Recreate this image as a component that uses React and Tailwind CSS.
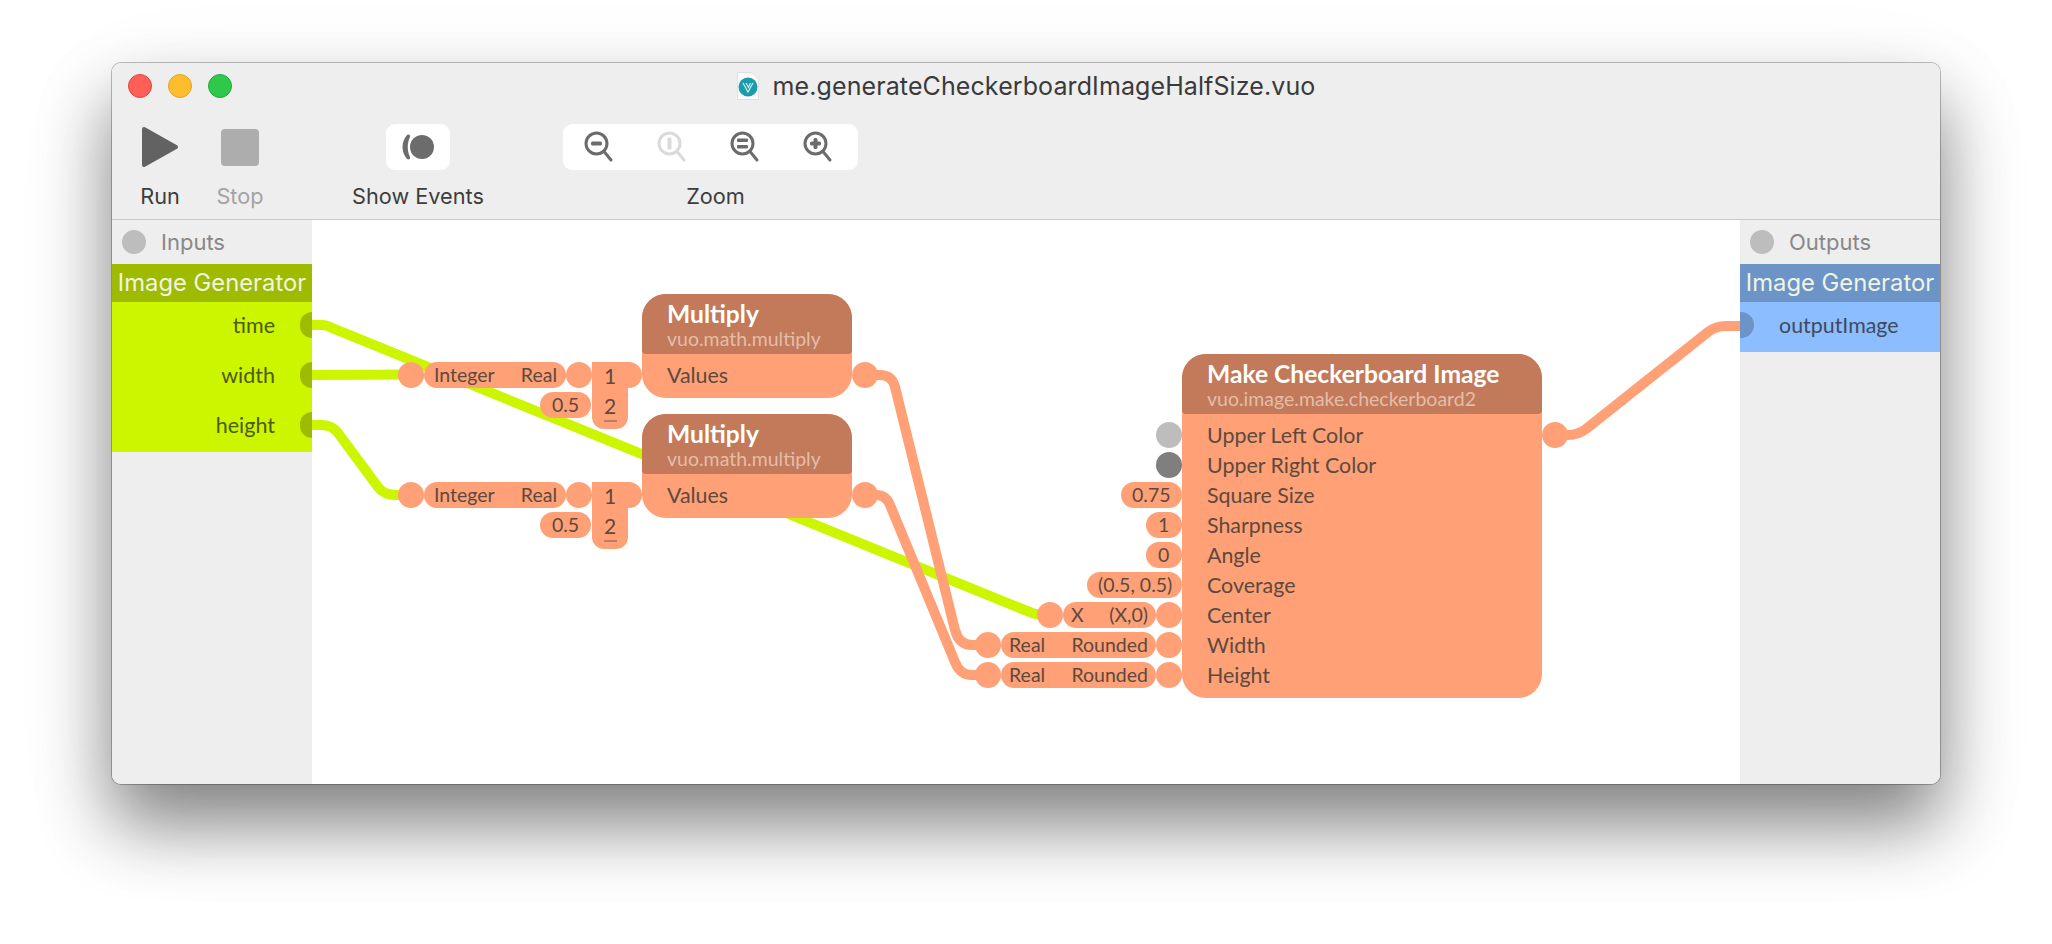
import React from 'react';

function Magnifier({ dim, children }) {
  const color = dim ? '#dadada' : '#6b6b6b';
  return (
    <svg width="32" height="32" viewBox="0 0 32 32" fill="none" stroke={color}>
      <circle cx="12.5" cy="12.5" r="10.5" strokeWidth="3" />
      <path d="M20 20.5 L27 29" strokeWidth="3" strokeLinecap="round" />
      <g fill={color} stroke="none">{children}</g>
    </svg>
  );
}

function Tool({ label, dim, className, labelClass, children }) {
  return (
    <div className={`flex flex-col items-center ${className}`}>
      <div className="flex h-[46px] w-full items-center justify-center">{children}</div>
      <div className={`mt-[12px] h-[28px] whitespace-nowrap text-[21.7px] leading-[28px] ${dim ? 'text-[#a3a3a3]' : 'text-[#3d3d3d]'} ${labelClass || ''}`}>
        {label}
      </div>
    </div>
  );
}

function TitleBar() {
  return (
    <div className="h-[157px] border-b border-[#c9c9c9] bg-[#eeeeee]">
      <div className="grid h-[46px] grid-cols-[1fr_auto_1fr] items-center">
        <div className="flex gap-[16px] pl-[16px]">
          <div className="h-[24px] w-[24px] rounded-full border border-[#e2463f] bg-[#ff5f57]" />
          <div className="h-[24px] w-[24px] rounded-full border border-[#e1a127] bg-[#ffbd2e]" />
          <div className="h-[24px] w-[24px] rounded-full border border-[#24a93a] bg-[#2ec84a]" />
        </div>
        <div className="flex items-center gap-[14px]">
          <svg width="22" height="28" viewBox="0 0 22 28">
            <path d="M0.5 0.5 H15 L21.5 7 V27.5 H0.5 Z" fill="#fbfbfb" stroke="#e0e0e0" />
            <circle cx="11" cy="15" r="9.5" fill="#1b9bab" />
            <path d="M6 11 L11 20 L16 11 M9 11 L11.5 15.5 L13.5 11" fill="none" stroke="#cfeef0" strokeWidth="1.2" />
          </svg>
          <div className="text-[25px] leading-[30px] tracking-[0.1px] text-[#3a3a3a]">me.generateCheckerboardImageHalfSize.vuo</div>
        </div>
        <div />
      </div>
      <div className="flex pl-[28px] pt-[15px]">
        <Tool label="Run" className="w-[40px]">
          <svg width="38" height="42" viewBox="0 0 38 42">
            <path d="M3 3 L35 21 L3 39 Z" fill="#626262" stroke="#626262" strokeWidth="4" strokeLinejoin="round" />
          </svg>
        </Tool>
        <Tool label="Stop" dim className="ml-[36px] w-[48px]">
          <div className="h-[37px] w-[38px] rounded-[4px] bg-[#adadad]" />
        </Tool>
        <Tool label="Show Events" className="ml-[87px] w-[134px]">
          <div className="flex h-[46px] w-[64px] items-center justify-center rounded-[9px] bg-white">
            <svg width="34" height="26" viewBox="0 0 34 26">
              <path d="M6 1 C0 8 0 18 6 25 C8 26 9.5 25 9 23 C6 17 6 9 9 3 C9.5 1 8 0 6 1 Z" fill="#6c6c6c" />
              <circle cx="21" cy="13" r="12" fill="#6c6c6c" />
            </svg>
          </div>
        </Tool>
        <Tool label="Zoom" className="ml-[78px] w-[295px]" labelClass="pl-[10px]">
          <div className="flex h-[46px] w-[295px] items-center gap-[41px] rounded-[9px] bg-white pl-[21px]">
            <Magnifier><rect x="7" y="10.5" width="11" height="4" rx="1.5" /></Magnifier>
            <Magnifier dim><rect x="10.5" y="6.5" width="4" height="12" rx="1.5" /></Magnifier>
            <Magnifier>
              <rect x="7" y="7.5" width="11" height="3.5" rx="1" />
              <rect x="7" y="14" width="11" height="3.5" rx="1" />
            </Magnifier>
            <Magnifier>
              <rect x="7" y="10.5" width="11" height="4" rx="1.5" />
              <rect x="10.5" y="7" width="4" height="11" rx="1.5" />
            </Magnifier>
          </div>
        </Tool>
      </div>
    </div>
  );
}

function PublishedPanel({ title, header, body, children }) {
  return (
    <div className="w-[200px] shrink-0 bg-[#eeeeee]">
      <div className="flex h-[44px] items-center pl-[10px]">
        <div className="h-[24px] w-[24px] rounded-full bg-[#bdbdbd]" />
        <div className="ml-[15px] text-[22px] text-[#888888]">{title}</div>
      </div>
      <div className={`flex h-[38px] items-center justify-center whitespace-nowrap text-[23.8px] text-[#f0f4e4] ${header}`}>Image Generator</div>
      <div className={`flex flex-col gap-[4px] pb-[4px] ${body}`}>{children}</div>
    </div>
  );
}

function InputRow({ label }) {
  return (
    <div className="flex h-[46px] items-center justify-end font-['Lato'] text-[21.5px] text-[#4e5a0c]">
      {label}
      <div className="ml-[25px] h-[26px] w-[12px] rounded-l-full bg-[#9fbb00]" />
    </div>
  );
}

function Dot({ className }) {
  return <div className={`h-[26px] w-[26px] shrink-0 rounded-full ${className || 'bg-[#ffa076]'}`} />;
}

function Pill({ className, children }) {
  return (
    <div className={`flex h-[26px] shrink-0 items-center whitespace-nowrap rounded-full bg-[#ffa076] font-['Lato'] text-[19.5px] text-[#5c4a3e] ${className}`}>
      {children}
    </div>
  );
}

// converter, then the Multiply value list with its drawer
function MultiplyInput({ className }) {
  return (
    <div className={`absolute flex w-[244px] items-start ${className}`}>
      <Dot />
      <Pill className="w-[142px] justify-between pl-[10px] pr-[9px]">
        <span>Integer</span>
        <span>Real</span>
      </Pill>
      <Dot />
      <div className="relative h-[67px] w-[36px] rounded-[12px] bg-[#ffa076] pt-[1px] text-center font-['Lato'] text-[21px] leading-[26px] text-[#5c4a3e]">
        <div className="absolute left-0 top-0 h-[26px] w-[50px] rounded-r-[13px] bg-[#ffa076]" />
        <div className="relative">1</div>
        <div className="relative mt-[4px]">2</div>
        <div className="relative mx-auto mt-[1px] h-[2px] w-[13px] bg-[#bd7d62]" />
        <Pill className="absolute left-[-52px] top-[30px] w-[51px] justify-center">0.5</Pill>
      </div>
    </div>
  );
}

function Node({ className, title, subtitle, children }) {
  return (
    <div className={`absolute rounded-[24px] bg-[#ffa076] ${className}`}>
      <div className="h-[60px] rounded-b-[4px] rounded-t-[24px] bg-[#c27a5a] pl-[25px] pt-[6px]">
        <div className="font-['Lato'] text-[24.6px] font-bold leading-[28px] text-white">{title}</div>
        <div className="mt-[1px] font-['Lato'] text-[19.5px] leading-[20px] text-[#e4bda9]">{subtitle}</div>
      </div>
      {children}
      <Dot className="absolute left-full top-[68px] bg-[#ffa076]" />
    </div>
  );
}

function NodeRow({ children }) {
  return <div className="flex h-[30px] items-center font-['Lato'] text-[21.4px] text-[#5c4a3e]">{children}</div>;
}

function Canvas() {
  return (
    <div className="relative min-w-0 flex-1 bg-white">
      <svg className="absolute inset-0 h-full w-full" viewBox="312 220 1428 564" fill="none" strokeWidth="10">
        <g stroke="#ccf600">
          <path d="M312 325 L322 325 Q327 325 332 328 L1032 613 Q1038 615 1050 615" />
          <path d="M312 375 L411 374.5" />
          <path d="M312 425 L322 425 Q332 425 338 433 L378 487 Q384 495 396 495 L411 495" />
        </g>
        <g stroke="#ffa076">
          <path d="M865 375 L880 375 Q892 375 895 387 L955 630 Q959 645 972 645 L987 645" />
          <path d="M865 495 L876 495 Q886 495 890 505 L955 662 Q960 675 972 675 L987 675" />
          <path d="M1555 435 L1568 435 Q1578 435 1586 429 L1708 332 Q1716 326 1726 326 L1740 326" />
        </g>
      </svg>

      <MultiplyInput className="left-[86px] top-[142px]" />
      <MultiplyInput className="left-[86px] top-[262px]" />

      <Node className="left-[330px] top-[74px] h-[104px] w-[210px]" title="Multiply" subtitle="vuo.math.multiply">
        <div className="pl-[25px] pt-[6px]"><NodeRow>Values</NodeRow></div>
      </Node>
      <Node className="left-[330px] top-[194px] h-[104px] w-[210px]" title="Multiply" subtitle="vuo.math.multiply">
        <div className="pl-[25px] pt-[6px]"><NodeRow>Values</NodeRow></div>
      </Node>

      <div className="absolute left-[662px] top-[202px] flex w-[208px] flex-col items-end gap-[4px]">
        <Dot className="bg-[#bdbdbd]" />
        <Dot className="bg-[#7f7f7f]" />
        <Pill className="w-[61px] pl-[11px]">0.75</Pill>
        <Pill className="w-[36px] pl-[12px]">1</Pill>
        <Pill className="w-[36px] pl-[12px]">0</Pill>
        <Pill className="w-[95px] pl-[11px]">(0.5, 0.5)</Pill>
        <div className="flex">
          <Dot />
          <Pill className="w-[93px] justify-between px-[8px]"><span>X</span><span>(X,0)</span></Pill>
          <Dot />
        </div>
        <div className="flex">
          <Dot />
          <Pill className="w-[155px] justify-between px-[8px]"><span>Real</span><span>Rounded</span></Pill>
          <Dot />
        </div>
        <div className="flex">
          <Dot />
          <Pill className="w-[155px] justify-between px-[8px]"><span>Real</span><span>Rounded</span></Pill>
          <Dot />
        </div>
      </div>

      <Node className="left-[870px] top-[134px] h-[344px] w-[360px]" title="Make Checkerboard Image" subtitle="vuo.image.make.checkerboard2">
        <div className="pl-[25px] pt-[6px]">
          {['Upper Left Color', 'Upper Right Color', 'Square Size', 'Sharpness', 'Angle', 'Coverage', 'Center', 'Width', 'Height'].map((name) => (
            <NodeRow key={name}>{name}</NodeRow>
          ))}
        </div>
      </Node>
    </div>
  );
}

export default function App() {
  return (
    <div className="h-[944px] overflow-hidden bg-white pl-[112px] pt-[63px] font-['Inter',sans-serif]">
      <div className="flex h-[721px] w-[1828px] flex-col overflow-hidden rounded-[9px] shadow-[0_0_0_1px_rgba(0,0,0,0.25),0_40px_70px_rgba(0,0,0,0.46),0_30px_110px_rgba(0,0,0,0.08)]">
        <TitleBar />
        <div className="flex min-h-0 flex-1">
          <PublishedPanel title="Inputs" header="bg-[#9fbb00]" body="bg-[#ccf600]">
            <InputRow label="time" />
            <InputRow label="width" />
            <InputRow label="height" />
          </PublishedPanel>
          <Canvas />
          <PublishedPanel title="Outputs" header="bg-[#6c94c6]" body="bg-[#8bbdff]">
            <div className="flex h-[46px] items-center font-['Lato'] text-[21.4px] text-[#404a5c]">
              <div className="h-[26px] w-[14px] rounded-r-full bg-[#6c94c6]" />
              <span className="ml-[25px]">outputImage</span>
            </div>
          </PublishedPanel>
        </div>
      </div>
    </div>
  );
}
